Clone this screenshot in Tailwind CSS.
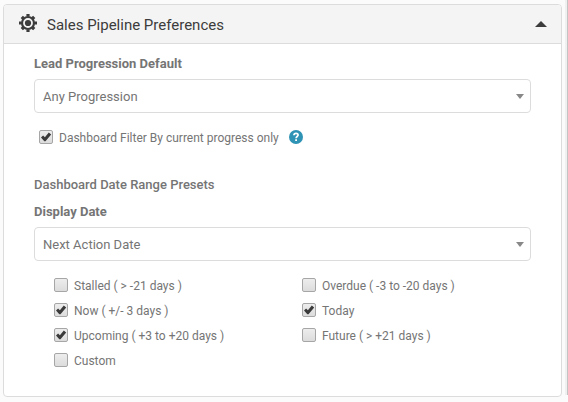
<!DOCTYPE html>
<html lang="en">

<head>
    <meta charset="UTF-8">
    <meta name="viewport" content="width=device-width, initial-scale=1.0">
    <script src="https://cdn.jsdelivr.net/npm/@tailwindcss/browser@4"></script>
    <title>Sales Pipeline Preferences</title>
</head>

<body class="flex items-start bg-[#fbfbfb] font-['Roboto',sans-serif] text-[13px] leading-5 text-[#757575]">

    <!-- shared check mark -->
    <svg class="hidden">
        <symbol id="check" viewBox="0 0 14 14">
            <path d="M2 7.6 4.1 5.6 5.9 7.2 9.8 2.6 12.2 4.5 6.5 11.2H5.3z" fill="#3a3a3a" />
        </symbol>
    </svg>

    <main class="flex-1 pt-1 pl-[3px] pr-[3px]">
        <section class="rounded border border-[#dcdcdc] bg-white overflow-hidden">

            <!-- Header -->
            <header class="flex items-center h-[39px] pl-[15px] pr-[14px] bg-[#f4f4f4] border-b border-[#dcdcdc] text-[#3c3c3c]">
                <svg class="size-[18px] mb-[2px]" viewBox="0 0 18 18">
                    <circle cx="9" cy="9" r="6" fill="none" stroke="currentColor" stroke-width="2.2" />
                    <circle cx="9" cy="9" r="3.1" fill="currentColor" />
                    <g stroke="currentColor" stroke-width="3.2">
                        <path d="M9 0v2.6M9 15.4V18M0 9h2.6M15.4 9H18" />
                        <path d="M2.8 2.8l1.7 1.7M13.5 13.5l1.7 1.7M2.8 15.2l1.7-1.7M13.5 4.5l1.7-1.7" />
                    </g>
                </svg>
                <h1 class="ml-[10px] pt-0.5 text-[15px]">Sales Pipeline Preferences</h1>
                <button type="button" class="ml-auto" aria-label="Collapse">
                    <svg class="w-3 h-1.5" viewBox="0 0 12 6">
                        <path d="M6 0l6 6H0z" fill="currentColor" />
                    </svg>
                </button>
            </header>

            <!-- Body -->
            <div class="pt-[10px] pb-[25px] px-[30px]">
                <label for="progression" class="block font-bold">Lead Progression Default</label>
                <div class="grid items-center mt-[5px]">
                    <select id="progression" class="col-start-1 row-start-1 appearance-none w-full h-[34px] px-2 pt-0.5 rounded border border-[#dcdcdc] bg-white">
                        <option>Any Progression</option>
                    </select>
                    <svg class="col-start-1 row-start-1 justify-self-end mr-[7px] w-2 h-[5px] pointer-events-none" viewBox="0 0 8 5">
                        <path d="M0 0h8L4 5z" fill="#888" />
                    </svg>
                </div>

                <div class="flex items-center mt-[15px] pl-[5px] text-xs/5">
                    <label class="flex items-center gap-1.5">
                        <span class="grid mb-0.5">
                            <input type="checkbox" checked class="peer col-start-1 row-start-1 appearance-none size-[14px] rounded-[2px] border border-[#a6a6a6] bg-linear-to-b from-[#ededed] to-[#dcdcdc]">
                            <svg class="col-start-1 row-start-1 size-[14px] invisible peer-checked:visible pointer-events-none"><use href="#check" /></svg>
                        </span>
                        Dashboard Filter By current progress only
                    </label>
                    <button type="button" class="ml-[10px] mb-0.5" aria-label="Help">
                        <svg class="size-[14px]" viewBox="0 0 14 14">
                            <circle cx="7" cy="7" r="7" fill="#2e93b5" />
                            <path d="M4.9 5.3C5 3.9 5.9 3.3 7 3.3s2.1.6 2.1 1.8c0 1.4-2 1.5-2 3.1" fill="none" stroke="#fff" stroke-width="1.7" />
                            <path d="M6.2 9.2h1.8v1.7H6.2z" fill="#fff" />
                        </svg>
                    </button>
                </div>

                <h2 class="mt-[27px] font-medium">Dashboard Date Range Presets</h2>
                <label for="display-date" class="block mt-[7px] font-bold">Display Date</label>
                <div class="grid items-center mt-[5px]">
                    <select id="display-date" class="col-start-1 row-start-1 appearance-none w-full h-[34px] px-2 pt-0.5 rounded border border-[#dcdcdc] bg-white">
                        <option>Next Action Date</option>
                    </select>
                    <svg class="col-start-1 row-start-1 justify-self-end mr-[7px] w-2 h-[5px] pointer-events-none" viewBox="0 0 8 5">
                        <path d="M0 0h8L4 5z" fill="#888" />
                    </svg>
                </div>

                <div class="grid grid-cols-2 gap-y-[5px] mt-[15px] pr-px text-xs/5">
                    <label class="flex items-center gap-1.5 pl-5">
                        <span class="grid mb-0.5">
                            <input type="checkbox" class="peer col-start-1 row-start-1 appearance-none size-[14px] rounded-[2px] border border-[#a6a6a6] bg-linear-to-b from-[#ededed] to-[#dcdcdc]">
                            <svg class="col-start-1 row-start-1 size-[14px] invisible peer-checked:visible pointer-events-none"><use href="#check" /></svg>
                        </span>
                        Stalled ( &gt; -21 days )
                    </label>
                    <label class="flex items-center gap-1.5 pl-5">
                        <span class="grid mb-0.5">
                            <input type="checkbox" class="peer col-start-1 row-start-1 appearance-none size-[14px] rounded-[2px] border border-[#a6a6a6] bg-linear-to-b from-[#ededed] to-[#dcdcdc]">
                            <svg class="col-start-1 row-start-1 size-[14px] invisible peer-checked:visible pointer-events-none"><use href="#check" /></svg>
                        </span>
                        Overdue ( -3 to -20 days )
                    </label>
                    <label class="flex items-center gap-1.5 pl-5">
                        <span class="grid mb-0.5">
                            <input type="checkbox" checked class="peer col-start-1 row-start-1 appearance-none size-[14px] rounded-[2px] border border-[#a6a6a6] bg-linear-to-b from-[#ededed] to-[#dcdcdc]">
                            <svg class="col-start-1 row-start-1 size-[14px] invisible peer-checked:visible pointer-events-none"><use href="#check" /></svg>
                        </span>
                        Now ( +/- 3 days )
                    </label>
                    <label class="flex items-center gap-1.5 pl-5">
                        <span class="grid mb-0.5">
                            <input type="checkbox" checked class="peer col-start-1 row-start-1 appearance-none size-[14px] rounded-[2px] border border-[#a6a6a6] bg-linear-to-b from-[#ededed] to-[#dcdcdc]">
                            <svg class="col-start-1 row-start-1 size-[14px] invisible peer-checked:visible pointer-events-none"><use href="#check" /></svg>
                        </span>
                        Today
                    </label>
                    <label class="flex items-center gap-1.5 pl-5">
                        <span class="grid mb-0.5">
                            <input type="checkbox" checked class="peer col-start-1 row-start-1 appearance-none size-[14px] rounded-[2px] border border-[#a6a6a6] bg-linear-to-b from-[#ededed] to-[#dcdcdc]">
                            <svg class="col-start-1 row-start-1 size-[14px] invisible peer-checked:visible pointer-events-none"><use href="#check" /></svg>
                        </span>
                        Upcoming ( +3 to +20 days )
                    </label>
                    <label class="flex items-center gap-1.5 pl-5">
                        <span class="grid mb-0.5">
                            <input type="checkbox" class="peer col-start-1 row-start-1 appearance-none size-[14px] rounded-[2px] border border-[#a6a6a6] bg-linear-to-b from-[#ededed] to-[#dcdcdc]">
                            <svg class="col-start-1 row-start-1 size-[14px] invisible peer-checked:visible pointer-events-none"><use href="#check" /></svg>
                        </span>
                        Future ( &gt; +21 days )
                    </label>
                    <label class="flex items-center gap-1.5 pl-5">
                        <span class="grid mb-0.5">
                            <input type="checkbox" class="peer col-start-1 row-start-1 appearance-none size-[14px] rounded-[2px] border border-[#a6a6a6] bg-linear-to-b from-[#ededed] to-[#dcdcdc]">
                            <svg class="col-start-1 row-start-1 size-[14px] invisible peer-checked:visible pointer-events-none"><use href="#check" /></svg>
                        </span>
                        Custom
                    </label>
                </div>
            </div>
        </section>
    </main>

    <!-- scroll track -->
    <div class="self-stretch w-[3px] mb-[2px] bg-[#f0f0f0] border-r border-[#c4c4c4]"></div>

</body>

</html>
